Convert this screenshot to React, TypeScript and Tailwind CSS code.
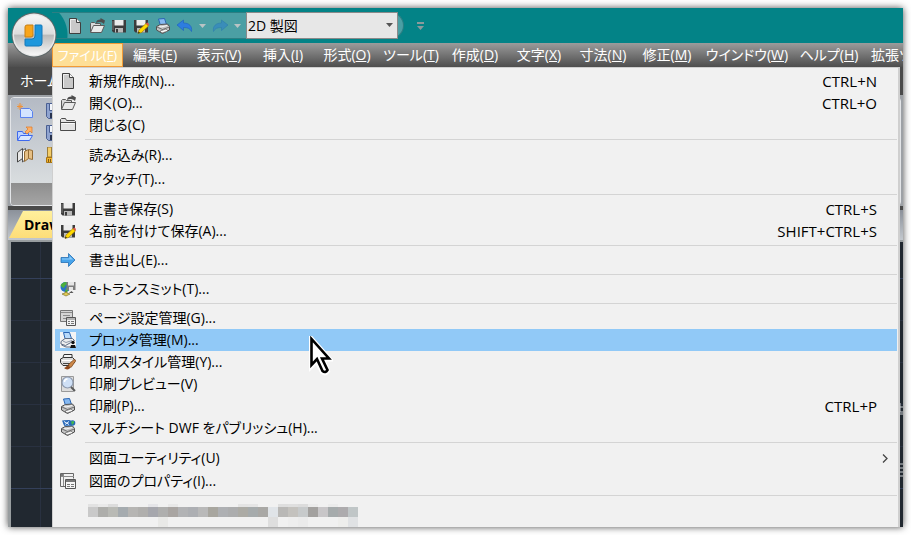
import type { ReactNode } from "react"

function Icon({ children }: { children: ReactNode }) {
  return (
    <svg width="16" height="16" viewBox="0 0 16 16" fill="none" aria-hidden="true">
      {children}
    </svg>
  )
}

const NewIcon = () => (
  <Icon>
    <path d="M2.5 .5h7l4 4v11h-11z" fill="#c9c9c9" stroke="#3f3f3f" />
    <path d="M3.5 14.5v-13h5" stroke="#eeeeee" />
    <path d="M9.5 .5v4h4" fill="#f4f4f4" stroke="#3f3f3f" />
  </Icon>
)

const OpenIcon = () => (
  <Icon>
    <path d="M1.5 14V5.5l1-1h3l1 1h5V8" fill="#d8d8d8" stroke="#5a5a5a" />
    <path d="M1.5 14.5l3-7h11l-3 7z" fill="#e9e9e9" stroke="#5a5a5a" />
    <path d="M7 5c0-2.500 2-3.500 4.500-3.500V0L16 2.500 15 6l-2-1.500C11 3.500 9 4 7 5z" fill="#4d4d4d" />
  </Icon>
)

const CloseIcon = () => (
  <Icon>
    <path d="M.5 13.500V2.500l1-1h4l1 2h8l1 1v9z" fill="#e2e2e2" stroke="#4a4a4a" />
    <path d="M1 5.500h14" stroke="#4a4a4a" />
    <path d="M1.500 6.500h13" stroke="#fafafa" />
  </Icon>
)

const SaveIcon = () => (
  <Icon>
    <path d="M1 2h14v12.500H2.500L1 13z" fill="#3c3c3c" />
    <path d="M3.500 2h9v5.500h-9z" fill="#ececec" />
    <path d="M4 10h8v4.500H4z" fill="#b9b9b9" />
    <path d="M5 11h2v3.500H5z" fill="#3c3c3c" />
    <path d="M2 3v9" stroke="#777" />
  </Icon>
)

const SaveAsIcon = () => (
  <Icon>
    <path d="M1 2h14v12.500H2.500L1 13z" fill="#3c3c3c" />
    <path d="M3.500 2h9v5.500h-9z" fill="#ececec" />
    <path d="M4 10h8v4.500H4z" fill="#b9b9b9" />
    <path d="M5 15.500l1-3.500 7-6.500 2.500 2.500-7 6.500z" fill="#ffd900" stroke="#9b7500" strokeWidth=".6" />
    <path d="M13 5.500l1.500-1 1.500 1.500-.5 2z" fill="#e2564b" />
    <path d="M5 15.500l.6-2 1.400 1.300z" fill="#222" />
  </Icon>
)

const ExportIcon = () => (
  <Icon>
    <path d="M1 5.500h7.500v-4L15 8l-6.500 6.500v-4H1z" fill="#47a3ea" stroke="#256fb3" strokeWidth=".8" />
    <path d="M2 6.500h7.500V4L13 7.500H2z" fill="#8fccf8" />
  </Icon>
)

const TransmitIcon = () => (
  <Icon>
    <circle cx="5.500" cy="6" r="5" fill="#2872c9" />
    <path d="M3 2c2-1.500 4-1 4 .5S5 4 4.500 6 2 6 1 5s1-2.500 2-3zM6 7l3 1-2 3H5z" fill="#4caf3c" />
    <path d="M2 13l3-1v-1h2v1l3 1-4 2z" fill="#e0ca57" stroke="#71651f" strokeWidth=".6" />
    <path d="M6.500 1h9v8h-9z" fill="#7d7d7d" />
    <path d="M8 1h6v3.500H8zM9 6h4v3H9z" fill="#e5e5e5" />
    <path d="M9 12l2.500-2 2 2z" fill="#555" />
  </Icon>
)

const PageSetupIcon = () => (
  <Icon>
    <path d="M.5 .5h12v11H.5z" fill="#d5d5d5" stroke="#777" />
    <path d="M1 2.500h11M3 5.500h7M3 8.500h4" stroke="#8b8b8b" />
    <path d="M6.500 7.500h9v8h-9z" fill="#f2f2f2" stroke="#555" />
    <path d="M7 9h8" stroke="#777" />
    <path d="M8 11.500h2m1 0h3M8 13.500h2m1 0h3" stroke="#777" />
  </Icon>
)

// shared by every printing command
const PrinterBody = () => (
  <>
    <path d="M3.500 1l6-.5 2 6-6 1z" fill="#86b9f1" stroke="#2a65b2" />
    <path d="M1.500 8.500l4-2 7-.5 2 2.500V12l-7 3.500-6-3.500z" fill="#c4c4c4" stroke="#505050" />
    <path d="M2 9l5.500 2.500 7-2.500M7.500 11.500V15" stroke="#6f6f6f" />
    <path d="M4 8l2 1 6-1.500" stroke="#f8f8f8" />
    <path d="M5 13l6-2 2 2-6 2z" fill="#f7f7f7" stroke="#666" strokeWidth=".7" />
  </>
)

const PrintIcon = () => (
  <Icon>
    <PrinterBody />
  </Icon>
)

const PlotterIcon = () => (
  <Icon>
    <path d="M0 0h16v16H0z" fill="#f4f4f4" />
    <path d="M3.500 .5h6l2 6H5z" fill="#b9dafa" stroke="#2a65b2" />
    <path d="M1 9.500l4-3h7.500l2 2-9 5-4.500-1.500z" fill="#ededed" stroke="#5d6b82" />
    <path d="M3 9l3 1.500 6-2" stroke="#8d98a9" />
    <path d="M1.500 13l4.500 2h4" stroke="#5d6b82" />
    <circle cx="13" cy="10.500" r="1.700" fill="#111" />
    <path d="M10 16l1-3h4l1 3z" fill="#111" />
  </Icon>
)

const StyleIcon = () => (
  <Icon>
    <path d="M4 .5h8v3H3z" fill="#f4f4f4" stroke="#333" />
    <path d="M.5 5l3-1.500h9l2 2v3l-4 3H3l-2.500-3z" fill="#dcdcdc" stroke="#333" />
    <path d="M2 6.500h11" stroke="#ffffff" />
    <path d="M3 9.500h8" stroke="#444" />
    <path d="M8 11l6-5.500 2 1-5 7z" fill="#cd8849" stroke="#6f3b12" strokeWidth=".7" />
    <path d="M4 14c2 0 2-2.500 4-2.500l2.500 2C9 16 6 16 4 14z" fill="#8f471b" />
  </Icon>
)

const PreviewIcon = () => (
  <Icon>
    <path d="M1.500 .5h12v15h-12z" fill="#dddddd" stroke="#999" />
    <circle cx="7.500" cy="6.500" r="5.500" fill="#cfe0f6" stroke="#8d99ad" strokeWidth="1.200" />
    <path d="M4.500 6c0-2 1-3 3-3" stroke="#fff" strokeWidth="1.400" />
    <path d="M11 11l4 4" stroke="#5b5b5b" strokeWidth="2" />
  </Icon>
)

const PublishIcon = () => (
  <Icon>
    <PrinterBody />
    <path d="M2 .5h9v5H4z" fill="#2a6ab8" />
    <path d="M4 1.500l5 3m0-3l-4 3" stroke="#e9f3ff" />
    <circle cx="12.500" cy="3" r="2.800" fill="#2569b8" />
    <path d="M11 1.500l3-.5v2l-2 2z" fill="#43b84c" />
  </Icon>
)

const PropertiesIcon = () => (
  <Icon>
    <path d="M.5 .5h13v5M.5 .5v13H5" stroke="#666" />
    <path d="M1 3.500h13M3.500 1v12" stroke="#8a8a8a" />
    <path d="M1 1h2v2H1z" fill="#777" />
    <path d="M5.500 6.500h10v9h-10z" fill="#f6f6f6" stroke="#555" />
    <path d="M6 8h9" stroke="#777" strokeWidth="2" />
    <path d="M7 11.500h3m1 0h3M7 13.500h3m1 0h3" stroke="#777" />
  </Icon>
)

const UndoIcon = () => (
  <Icon>
    <path d="M0 7l6.500-5v3C12 5 15.500 8 14.500 13.500 13 10.500 11 9.500 6.500 9.500v3z" fill="#2d7de0" stroke="#1d5ec0" strokeWidth=".6" />
  </Icon>
)

const RedoIcon = () => (
  <Icon>
    <path d="M16 7L9.500 2v3C4 5 .5 8 1.500 13.500 3 10.500 5 9.500 9.500 9.500v3z" fill="#3a8db9" stroke="#2e7eab" strokeWidth=".6" />
  </Icon>
)

const RibbonNewIcon = () => (
  <Icon>
    <path d="M3.500 5.500h9l3 3v6h-12z" fill="#d3e4ff" stroke="#5a82ef" />
    <path d="M3 0v7M0 3.500h6M1 1.500l4 4m0-4l-4 4" stroke="#f0933a" />
  </Icon>
)

const RibbonOpenIcon = () => (
  <Icon>
    <path d="M.5 15V6.500h5l1 2h5V10" fill="#bdd3ff" stroke="#3e69ee" />
    <path d="M.5 15.500l3-5h12l-3 5z" fill="#dbe8ff" stroke="#3e69ee" />
    <path d="M8 7l3-3-2-2h6v6l-2-2-3 3z" fill="#ffb067" stroke="#dd7a25" strokeWidth=".7" />
  </Icon>
)

const RibbonSaveIcon = () => (
  <Icon>
    <path d="M.5 .5h15v15h-13l-2-2z" fill="#8fa3cf" stroke="#4a5f92" />
    <path d="M3.500 .5h9v7h-9z" fill="#f3f6fc" stroke="#4a5f92" />
    <path d="M4 10h8v5H4z" fill="#27324f" />
  </Icon>
)

const RibbonMapIcon = () => (
  <Icon>
    <path d="M.5 5.500l5-4v10l-5 3.500z" fill="#e8e8e8" stroke="#444" />
    <path d="M5.500 3.500l3-2 1 10-4 3.500z" fill="#ffffff" stroke="#555" />
    <path d="M7.500 4.500l4-2 4 1v9l-4-1-4 3z" fill="#e5bf86" stroke="#946c35" />
    <path d="M11.500 3v8" stroke="#946c35" />
  </Icon>
)

const RibbonBrushIcon = () => (
  <Icon>
    <path d="M1.500 0h4v10h-4z" fill="#f4cd68" stroke="#9b7c3a" />
    <path d="M.5 10.500h6v5h-6z" fill="#f2b431" stroke="#a87412" />
    <path d="M2.500 12v3m2-3v3" stroke="#7e5a18" />
  </Icon>
)

const quickTools = [
  { label: "新規作成", icon: <NewIcon /> },
  { label: "開く", icon: <OpenIcon /> },
  { label: "上書き保存", icon: <SaveIcon /> },
  { label: "名前を付けて保存", icon: <SaveAsIcon /> },
  { label: "印刷", icon: <PrintIcon /> },
]

const menus = [
  { name: "編集", access: "E", width: "w-16" },
  { name: "表示", access: "V", width: "w-16" },
  { name: "挿入", access: "I", width: "w-16" },
  { name: "形式", access: "O", width: "w-16" },
  { name: "ツール", access: "T", width: "w-16" },
  { name: "作成", access: "D", width: "w-16" },
  { name: "文字", access: "X", width: "w-16" },
  { name: "寸法", access: "N", width: "w-16" },
  { name: "修正", access: "M", width: "w-16" },
  { name: "ウインドウ", access: "W", width: "w-24" },
  { name: "ヘルプ", access: "H", width: "w-[68px]" },
]

type Item = {
  label: string
  icon?: ReactNode
  shortcut?: string
  active?: boolean
  submenu?: boolean
  tall?: boolean
}

const groups: Item[][] = [
  [
    { label: "新規作成(N)...", icon: <NewIcon />, shortcut: "CTRL+N" },
    { label: "開く(O)...", icon: <OpenIcon />, shortcut: "CTRL+O" },
    { label: "閉じる(C)", icon: <CloseIcon /> },
  ],
  [
    { label: "読み込み(R)...", tall: true },
    { label: "アタッチ(T)...", tall: true },
  ],
  [
    { label: "上書き保存(S)", icon: <SaveIcon />, shortcut: "CTRL+S" },
    { label: "名前を付けて保存(A)...", icon: <SaveAsIcon />, shortcut: "SHIFT+CTRL+S" },
  ],
  [{ label: "書き出し(E)...", icon: <ExportIcon /> }],
  [{ label: "e-トランスミット(T)...", icon: <TransmitIcon /> }],
  [
    { label: "ページ設定管理(G)...", icon: <PageSetupIcon /> },
    { label: "プロッタ管理(M)...", icon: <PlotterIcon />, active: true },
    { label: "印刷スタイル管理(Y)...", icon: <StyleIcon /> },
    { label: "印刷プレビュー(V)", icon: <PreviewIcon /> },
    { label: "印刷(P)...", icon: <PrintIcon />, shortcut: "CTRL+P" },
    { label: "マルチシート DWF をパブリッシュ(H)...", icon: <PublishIcon /> },
  ],
  [
    { label: "図面ユーティリティ(U)", submenu: true, tall: true },
    { label: "図面のプロパティ(I)...", icon: <PropertiesIcon /> },
  ],
]

// masked recent file entry: three bands of blocks, 10px per column
const maskMiddle = [
  "#c9c9c9", "#aeaeab", "#b9bab5", "#a5abaf", "#b6b5b3", "#b0afad", "#a6a7ad", "#afafae", "#a9a5a2",
  "#b2b3b5", "#adafb3", "#b9b9b9", "#a8a69f", "#aeb0b3", "#acadae", "#acaba5", "#a6abac", "#a9a8a5",
  "#e0e4e8", "#b9b8b6", "#c4c2be", "#c7cacb", "#a3a19f", "#c8c6c8", "#a6abac", "#adabad", "#c0c6c7",
]
const maskTop = [
  "#e2e2e2", "#e9e9e9", "#dcdcdc", "#f1f1f1", "#f1f1f1", "#f1f1f1", "#e5e5e8", "#f1f1f1", "#e8e8e8",
  "#f1f1f1", "#f1f1f1", "#f1f1f1", "#f1f1f1", "#f1f1f1", "#f1f1f1", "#e4e4e4", "#e5e5e5", "#f1f1f1",
  "#f1f1f1", "#dedede", "#dfdfdf", "#dcdcdc", "#ebebeb", "#f1f1f1", "#ebebeb", "#f1f1f1", "#f1f1f1",
]
const maskBottom = [
  "#f1f1f1", "#f1f1f1", "#f1f1f1", "#f1f1f1", "#f1f1f1", "#f1f1f1", "#f1f1f1", "#e9e9e7", "#f1f1f1",
  "#f1f1f1", "#f1f1f1", "#f1f1f1", "#f1f1f1", "#f1f1f1", "#f1f1f1", "#f1f1f1", "#f1f1f1", "#f1f1f1",
  "#dedede", "#f1f1f1", "#eeeeee", "#ebebeb", "#f1f1f1", "#f1f1f1", "#f1f1f1", "#eeeeec", "#e0e2e4",
]

function MaskedEntry() {
  return (
    <div className="flex flex-col pl-[33px] pt-[5px]">
      <div className="flex h-[3px]">
        {maskTop.map((color, idx) => (
          <span key={idx} className="w-[10px]" style={{ background: color }} />
        ))}
      </div>
      <div className="flex h-[10px]">
        {maskMiddle.map((color, idx) => (
          <span key={idx} className="w-[10px]" style={{ background: color }} />
        ))}
      </div>
      <div className="flex h-[10px]">
        {maskBottom.map((color, idx) => (
          <span key={idx} className="w-[10px]" style={{ background: color }} />
        ))}
      </div>
    </div>
  )
}

function MenuRow({ item }: { item: Item }) {
  return (
    <button
      className={`flex w-full items-center pl-[5px] pr-5 text-left ${item.tall ? "h-6" : "h-[22px]"} ${
        item.active ? "bg-[#91c9f7]" : ""
      }`}
    >
      <span className="w-[29px] shrink-0">{item.icon}</span>
      <span className="grow text-[14px]">{item.label}</span>
      {item.shortcut && <span className="text-[15px]">{item.shortcut}</span>}
      {item.submenu && (
        <svg width="7" height="9" viewBox="0 0 7 9" fill="none" className="-mr-3" aria-hidden="true">
          <path d="M1 .5l4 4-4 4" stroke="#444" strokeWidth="1.300" />
        </svg>
      )}
    </button>
  )
}

function FileMenu() {
  return (
    <div className="absolute bottom-0 left-11 right-[3px] top-[59px] overflow-hidden border-l border-r-2 border-t border-[#cfcfcf] bg-[#f1f1f1] pl-0.5 pr-px pt-0.5 leading-5 text-black">
      {groups.map((group, idx) => (
        <div key={idx}>
          {group.map((item) => (
            <MenuRow key={item.label} item={item} />
          ))}
          <hr className="my-[3px] ml-[30px] h-px border-0 bg-[#d4d4d4]" />
        </div>
      ))}
      <MaskedEntry />
    </div>
  )
}

function TitleBar() {
  return (
    <header className="flex h-[35px] shrink-0 items-center bg-[#038387] pl-11">
      <div className="flex h-[27px] items-center rounded-r-full border-y border-r border-[#2c7f83] bg-[radial-gradient(circle_at_-18px_22px,#038387_33px,#4b9fa4_34px)] pl-[15px] pr-[5px]">
        <div className="flex items-center gap-[6px]">
          {quickTools.map((tool) => (
            <button key={tool.label} aria-label={tool.label}>
              {tool.icon}
            </button>
          ))}
          <button aria-label="元に戻す">
            <UndoIcon />
          </button>
        </div>
        <button aria-label="元に戻す履歴" className="px-[6px]">
          <svg width="7" height="4" viewBox="0 0 7 4"><path d="M0 0h7L3.500 4z" fill="#b9c4c5" /></svg>
        </button>
        <button aria-label="やり直し">
          <RedoIcon />
        </button>
        <button aria-label="やり直し履歴" className="pl-[6px] pr-[5px]">
          <svg width="7" height="4" viewBox="0 0 7 4"><path d="M0 0h7L3.500 4z" fill="#b9c4c5" /></svg>
        </button>
        <div className="relative h-[27px] w-[152px]">
          <select
            aria-label="ワークスペース"
            className="size-full appearance-none border border-[#8a8a8a] bg-[#e7e7e7] pl-px text-[14px] leading-5 text-black"
          >
            <option>2D 製図</option>
          </select>
          <svg width="7" height="4" viewBox="0 0 7 4" className="pointer-events-none absolute right-[5px] top-[11px]">
            <path d="M0 0h7L3.500 4z" fill="#555" />
          </svg>
        </div>
      </div>
      <button aria-label="クイックアクセスのカスタマイズ" className="ml-[13px]">
        <svg width="7" height="8" viewBox="0 0 7 8"><path d="M0 0h7v2H0zM0 4h7L3.500 8z" fill="#8b9a9b" /></svg>
      </button>
    </header>
  )
}

function MenuBar() {
  return (
    <nav className="flex h-6 shrink-0 items-stretch overflow-hidden whitespace-nowrap bg-linear-to-b from-[#9c9c9c] to-[#4e4e4e] pl-11 text-[14px] leading-5 text-white">
      <button className="w-[71px] shrink-0 border border-[#f29b37] bg-[#fedf97] text-[13px]">
        ファイル(<u>F</u>)
      </button>
      <div className="flex items-center">
        {menus.map((menu) => (
          <button key={menu.name} className={`shrink-0 ${menu.width}`}>
            {menu.name}(<u>{menu.access}</u>)
          </button>
        ))}
        <button className="shrink-0 pl-2">拡張ツ</button>
      </div>
    </nav>
  )
}

function Ribbon() {
  return (
    <>
      <div className="flex h-7 shrink-0 items-center bg-[#4a4a4a] pl-3 text-[14px] leading-5 text-white">
        <button className="whitespace-nowrap">ホーム</button>
      </div>
      <div className="shrink-0 bg-[#9da1a6] p-0.5 pb-0">
        <section className="flex h-[109px] flex-col overflow-hidden rounded border border-[#e3e5e8]">
          <div className="flex grow justify-between bg-linear-to-b from-[#b4bac4] to-[#d9dddf] pl-[6px] pt-[5px]">
            <div className="grid h-min grid-cols-2 gap-x-[13px] gap-y-[6px]">
              <button aria-label="新規"><RibbonNewIcon /></button>
              <button aria-label="保存"><RibbonSaveIcon /></button>
              <button aria-label="開く"><RibbonOpenIcon /></button>
              <button aria-label="別名保存"><RibbonSaveIcon /></button>
              <button aria-label="シート"><RibbonMapIcon /></button>
              <button aria-label="コピー"><RibbonBrushIcon /></button>
            </div>
            <svg width="4" height="72" viewBox="0 0 4 72" fill="none" aria-hidden="true">
              <path d="M0 3h4M1 7h3M1 3v9h3" stroke="#5c4a12" />
              <path d="M0 14h4M2 5h2" stroke="#e5b931" strokeWidth="2" />
              <path d="M0 39.500h3v9H0" stroke="#2d135e" />
              <path d="M0 59h4m-4 5h4" stroke="#33597f" strokeWidth="2" />
              <path d="M2 61v6" stroke="#c47a35" />
            </svg>
          </div>
          <div className="h-[22px] bg-linear-to-b from-[#8e8e8e] to-[#a5a5a5]" />
        </section>
      </div>
      <div className="h-1 shrink-0 bg-[#4a4a4a]" />
      <div className="flex h-[30px] shrink-0 items-end bg-linear-to-b from-[#8b919a] to-[#c3c8ce] pb-0.5 pl-px">
        <button className="h-[27px] w-32 bg-linear-to-b from-[#fff09c] to-[#fddd78] pl-[15px] text-left text-[14px] leading-5 font-bold text-black [clip-path:polygon(14px_0,100%_0,100%_100%,0_100%)]">
          Drawing1
        </button>
      </div>
    </>
  )
}

function Canvas() {
  return (
    <main className="relative grow border-l-[3px] border-t-2 border-[#989d9f] bg-[#212830]">
      <svg className="size-full" aria-hidden="true">
        <defs>
          <pattern id="minor" width="42" height="42" x="29" y="36" patternUnits="userSpaceOnUse">
            <path d="M.5 0v42M0 .5h42" stroke="#293140" />
          </pattern>
          <pattern id="major" width="210" height="210" x="71" y="36" patternUnits="userSpaceOnUse">
            <path d="M.5 0v210M0 .5h210" stroke="#34405a" />
          </pattern>
        </defs>
        <rect width="100%" height="100%" fill="url(#minor)" />
        <rect width="100%" height="100%" fill="url(#major)" />
      </svg>
      <svg width="3" height="76" viewBox="0 0 3 76" className="absolute right-0 top-[160px]" aria-hidden="true">
        <path d="M0 1v9h3M0 5h3M0 12h3M0 62h3M0 66h3M0 70h3M0 74h3" stroke="#c9ccd0" fill="none" />
      </svg>
    </main>
  )
}

function AppButton() {
  return (
    <button aria-label="アプリケーションメニュー" className="absolute left-[3px] top-1">
      <svg width="46" height="46" viewBox="0 0 46 46">
        <defs>
          <linearGradient id="orb" x1="0" y1="0" x2="0" y2="1">
            <stop offset="0" stopColor="#f6f6f6" />
            <stop offset=".48" stopColor="#dcdcdc" />
            <stop offset=".5" stopColor="#b9b9b9" />
            <stop offset="1" stopColor="#f7f7f7" />
          </linearGradient>
        </defs>
        <circle cx="23" cy="23" r="22.500" fill="#5e6768" />
        <circle cx="23" cy="23" r="21.500" fill="#e8e8e8" />
        <circle cx="23" cy="23" r="20" fill="url(#orb)" />
        <path d="M24 13h6q1 0 1 1v17q0 3-3 3H15q-1 0-1-1v-6h7q3 0 3-3z" fill="#1e97dc" stroke="#1479ba" />
        <path d="M16 13h6v10q0 2-2 2h-6V15q0-2 2-2z" fill="#f8a51b" stroke="#c67e14" />
      </svg>
    </button>
  )
}

export default function App() {
  return (
    <div className="h-screen bg-white p-2 font-['Open_Sans','Noto_Sans_CJK_JP',sans-serif] [font-feature-settings:'palt']">
      <div className="relative flex h-full flex-col shadow-[0_0_7px_rgba(0,0,0,0.7)]">
        <div className="flex h-full flex-col overflow-hidden">
          <TitleBar />
          <MenuBar />
          <Ribbon />
          <Canvas />
        </div>
        <FileMenu />
        <AppButton />
        <svg width="24" height="40" viewBox="0 0 24 40" className="pointer-events-none absolute left-[301px] top-[328px]" aria-hidden="true">
          <path
            d="M2.500 3v27l5-5 6 11q3 2 5-1l-5-12h7z"
            fill="#fff"
            stroke="#fff"
            strokeWidth="5"
          />
          <path
            d="M2.500 3v26l5.500-6 5.500 12q3 2.500 5-1l-5.500-11.500h7z"
            fill="#fff"
            stroke="#000"
            strokeWidth="2.600"
          />
        </svg>
      </div>
    </div>
  )
}
